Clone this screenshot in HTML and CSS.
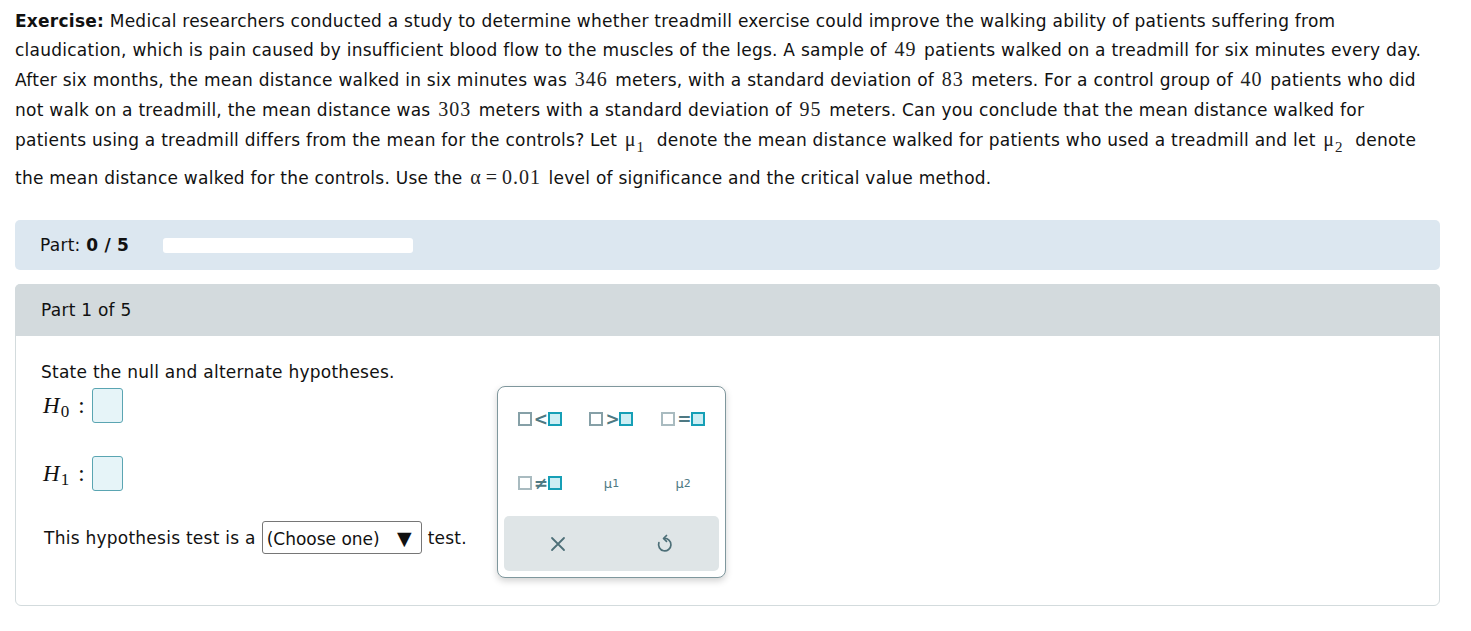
FILE: index.html
```html
<!DOCTYPE html>
<html>
<head>
<meta charset="utf-8">
<link rel="stylesheet" href="styles.css">
</head>
<body>
<div class="page">
  <div class="exercise">
    <div class="line l1"><b>Exercise:</b> Medical researchers conducted a study to determine whether treadmill exercise could improve the walking ability of patients suffering from</div>
    <div class="line">claudication, which is pain caused by insufficient blood flow to the muscles of the legs. A sample of <span class="m">49</span> patients walked on a treadmill for six minutes every day.</div>
    <div class="line">After six months, the mean distance walked in six minutes was <span class="m">346</span> meters, with a standard deviation of <span class="m">83</span> meters. For a control group of <span class="m">40</span> patients who did</div>
    <div class="line">not walk on a treadmill, the mean distance was <span class="m">303</span> meters with a standard deviation of <span class="m">95</span> meters. Can you conclude that the mean distance walked for</div>
    <div class="line">patients using a treadmill differs from the mean for the controls? Let <span class="m mu">μ<sub>1</sub></span> denote the mean distance walked for patients who used a treadmill and let <span class="m mu">μ<sub>2</sub></span> denote</div>
    <div class="line l6">the mean distance walked for the controls. Use the <span class="m">α<span class="eq">=</span>0.01</span> level of significance and the critical value method.</div>
  </div>

  <div class="partbar">
    <span class="partlabel">Part: <b>0 / 5</b></span>
    <span class="progress"></span>
  </div>

  <div class="card">
    <div class="cardhead">Part 1 of 5</div>
    <div class="cardbody">
      <div class="prompt">State the null and alternate hypotheses.</div>
      <div class="hyp h0">
        <span class="hlabel"><i>H</i><sub>0</sub><span class="colon">:</span></span>
        <span class="ansbox"></span>
      </div>
      <div class="hyp h1">
        <span class="hlabel"><i>H</i><sub>1</sub><span class="colon">:</span></span>
        <span class="ansbox"></span>
      </div>
      <div class="testrow">
        <span>This hypothesis test is a</span>
        <span class="choose"><span>(Choose one)</span><span class="tri">▼</span></span>
        <span>test.</span>
      </div>

      <div class="palette">
        <div class="pgrid">
          <div class="pbtn"><span class="sq"></span><span class="op">&lt;</span><span class="sq c"></span></div>
          <div class="pbtn"><span class="sq"></span><span class="op">&gt;</span><span class="sq c"></span></div>
          <div class="pbtn"><span class="sq lt"></span><span class="op">=</span><span class="sq c"></span></div>
          <div class="pbtn"><span class="sq lt"></span><span class="op">≠</span><span class="sq c"></span></div>
          <div class="pbtn mu">μ<sub>1</sub></div>
          <div class="pbtn mu">μ<sub>2</sub></div>
        </div>
        <div class="pfoot">
          <div class="fbtn">
            <svg width="16" height="16" viewBox="0 0 16 16"><path d="M2 2 L14 14 M14 2 L2 14" stroke="#4d6f78" stroke-width="1.8" fill="none" stroke-linecap="round"/></svg>
          </div>
          <div class="fbtn">
            <svg width="18" height="20" viewBox="0 0 18 20"><path d="M8 4.5 A6.2 6.2 0 1 1 2.9 8.6" stroke="#4d6f78" stroke-width="1.7" fill="none" stroke-linecap="round"/><path d="M10.5 1.5 L7.5 4.5 L10.5 7.3" stroke="#4d6f78" stroke-width="1.7" fill="none" stroke-linecap="round" stroke-linejoin="round"/></svg>
          </div>
        </div>
      </div>
    </div>
  </div>
</div>
</body>
</html>
```

FILE: styles.css
```css
* { box-sizing: border-box; }
html, body { margin: 0; padding: 0; background: #fff; }
body {
  font-family: "DejaVu Sans", Verdana, sans-serif;
  font-size: 17px;
  letter-spacing: 0.25px;
  color: #111;
}
.page { padding: 7px 31px 0 15px; }

.line { height: 30px; line-height: 30px; white-space: nowrap; }
.line.l1 { height: 28px; line-height: 28px; }
.line.l6 { height: 46px; line-height: 46px; }
.m {
  font-family: "Liberation Serif", "Times New Roman", serif;
  font-size: 20px;
  letter-spacing: 1px;
  line-height: 1;
  color: #222;
  padding: 0 2px;
}
.m.mu { padding-right: 6px; }
.m sub { font-size: 15px; vertical-align: -6px; line-height: 0; }
.m .eq { padding: 0 4px; }

.partbar {
  margin-top: 19px;
  height: 50px;
  background: #dce7f0;
  border-radius: 5px;
  display: flex;
  align-items: center;
  padding-left: 25px;
}
.partlabel { width: 123px; }
.progress {
  width: 250px;
  height: 15px;
  background: #fff;
  border-radius: 3px;
}

.card {
  margin-top: 14px;
  border: 1px solid #d3dbdd;
  border-radius: 6px;
}
.cardhead {
  height: 52px;
  background: #d3dadd;
  border-radius: 5px 5px 0 0;
  display: flex;
  align-items: center;
  margin: -1px -1px 0 -1px;
  padding-left: 26px;
}
.cardbody {
  position: relative;
  padding: 24px 25px 51px 25px;
}
.prompt { line-height: 24px; }
.hyp { display: flex; align-items: center; height: 35px; }
.h0 { margin-top: 4px; }
.h1 { margin-top: 33px; }
.hlabel {
  font-family: "Liberation Serif", "Times New Roman", serif;
  font-size: 23px;
  letter-spacing: 0;
  width: 51px;
  padding-left: 2px;
  display: flex;
  align-items: baseline;
}
.hlabel i { font-style: italic; }
.hlabel sub { font-size: 17px; position: relative; top: 4px; margin-left: 1px; vertical-align: baseline; }
.hlabel .colon { margin-left: 9px; }
.ansbox {
  width: 31px;
  height: 35px;
  border: 1.5px solid #5aa5b2;
  background: #e6f4f8;
  border-radius: 3px;
}
.testrow {
  margin-top: 30px;
  display: flex;
  align-items: center;
  padding-left: 3px;
  gap: 6px;
}
.choose {
  height: 33px;
  width: 160px;
  border: 1px solid #767676;
  border-radius: 3px;
  display: flex;
  align-items: center;
  justify-content: space-between;
  padding: 2px 9px 0 4px;
  letter-spacing: 0;
}
.tri { font-size: 19px; line-height: 1; }

.palette {
  position: absolute;
  left: 481px;
  top: 50px;
  width: 229px;
  height: 192px;
  background: #fff;
  border: 1px solid #7f979d;
  border-radius: 8px;
  box-shadow: 0 3px 7px rgba(0,0,0,0.18);
  padding: 0 6px 6px 6px;
  letter-spacing: 0;
}
.pgrid {
  display: grid;
  grid-template-columns: repeat(3, 1fr);
  grid-auto-rows: 64px;
}
.pbtn {
  display: flex;
  align-items: center;
  justify-content: center;
  gap: 2px;
}
.sq {
  width: 14px;
  height: 14px;
  border: 2px solid #86a0a7;
  background: #fff;
}
.sq.lt { border-color: #a9bbc0; }
.sq.c { border-color: #169fb6; background: #cdeef4; }
.op {
  font-family: "DejaVu Sans", sans-serif;
  font-size: 17px;
  font-weight: bold;
  color: #4e7983;
  width: 12px;
  text-align: center;
  line-height: 14px;
}
.pbtn.mu {
  font-family: "DejaVu Sans", sans-serif;
  font-size: 13px;
  color: #4e7983;
  gap: 0;
}
.pbtn.mu sub { font-size: 11px; vertical-align: -3px; }
.pfoot {
  height: 55px;
  margin-top: 1px;
  background: #dfe5e7;
  border-radius: 5px;
  display: flex;
}
.fbtn {
  flex: 1;
  display: flex;
  align-items: center;
  justify-content: center;
}
```
